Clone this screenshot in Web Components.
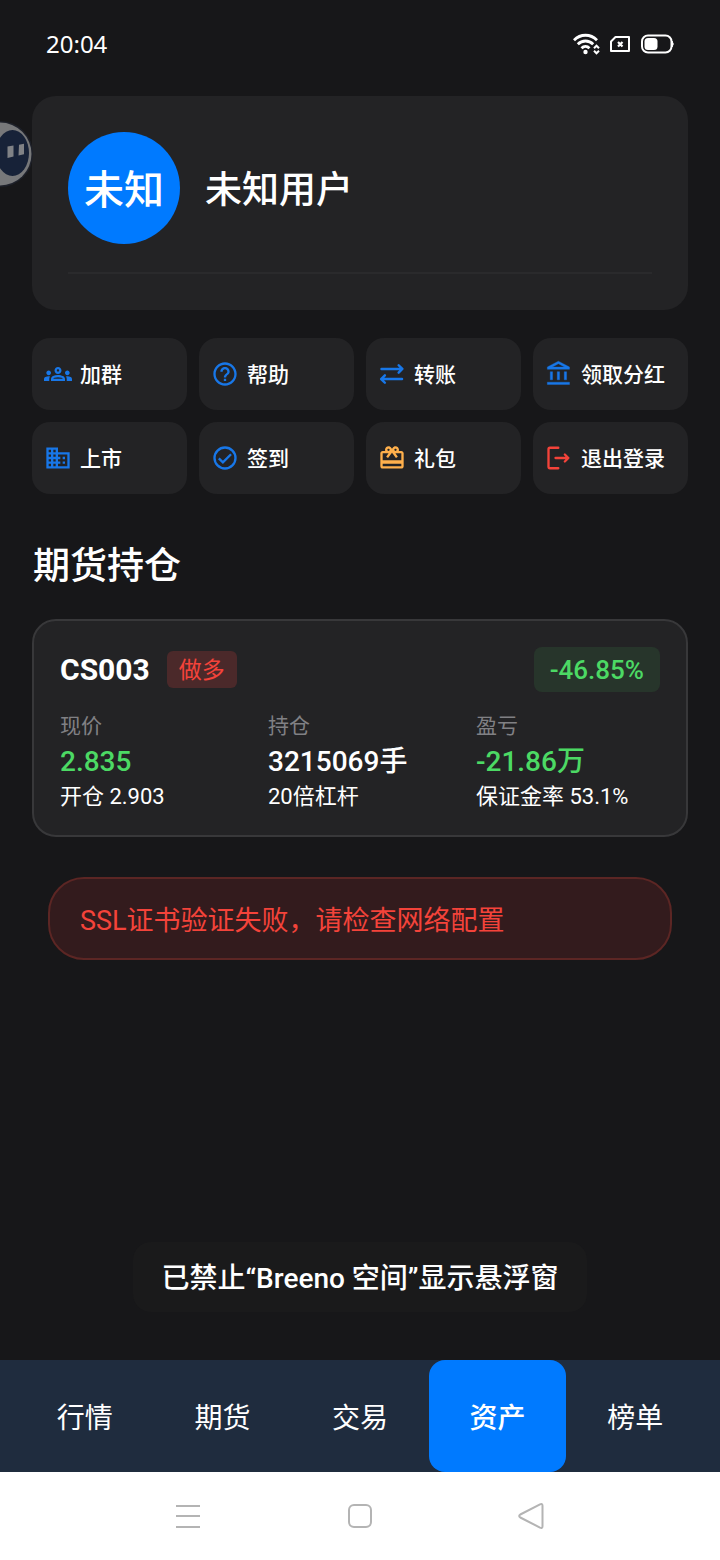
<!DOCTYPE html>
<html lang="zh-CN">
<head>
<meta charset="utf-8">
<meta name="viewport" content="width=device-width, initial-scale=1">
<title>资产</title>
<style>
    :root {
        --bg: #171719;
        --surface: #232325;
        --line: #38383a;
        --blue: #007aff;
        --icon-blue: #1877e8;
        --green: #4cd964;
        --red: #f4433a;
        --gold: #ffb04c;
        --muted: #808084;
    }

    body {
        margin: 0;
        min-height: 100vh;
        display: flex;
        flex-direction: column;
        background: var(--bg);
        color: #fff;
        font-family: Roboto, "Noto Sans CJK SC", sans-serif;
        font-size: 21px;
        line-height: 24px;
    }

    main {
        flex: 1;
        padding: 8px 32px 32px;
    }

    h1 {
        margin: 46px 0 26px;
        padding-left: 1px;
        font-size: 37px;
        line-height: 53px;
        font-weight: 500;
    }
</style>
</head>
<body>
    <status-bar>20:04</status-bar>

    <main>
        <profile-card avatar="未知">未知用户</profile-card>

        <action-grid>
            <action-tile icon="groups">加群</action-tile>
            <action-tile icon="help">帮助</action-tile>
            <action-tile icon="transfer">转账</action-tile>
            <action-tile icon="bank">领取分红</action-tile>
            <action-tile icon="building">上市</action-tile>
            <action-tile icon="check">签到</action-tile>
            <action-tile icon="gift" style="--tint: var(--gold)">礼包</action-tile>
            <action-tile icon="logout" style="--tint: var(--red)">退出登录</action-tile>
        </action-grid>

        <h1>期货持仓</h1>

        <position-card code="CS003" side="做多" change="-46.85%">
            <stat-cell label="现价" value="2.835" note="开仓 2.903" style="--value: var(--green)"></stat-cell>
            <stat-cell label="持仓" value="3215069手" note="20倍杠杆"></stat-cell>
            <stat-cell label="盈亏" value="-21.86万" note="保证金率 53.1%" style="--value: var(--green)"></stat-cell>
        </position-card>

        <error-banner>SSL证书验证失败，请检查网络配置</error-banner>
    </main>

    <tab-bar>
        <tab-item>行情</tab-item>
        <tab-item>期货</tab-item>
        <tab-item>交易</tab-item>
        <tab-item active>资产</tab-item>
        <tab-item>榜单</tab-item>
    </tab-bar>
    <system-nav></system-nav>

    <toast-message>已禁止“Breeno 空间”显示悬浮窗</toast-message>
    <assist-bubble></assist-bubble>

<script>
// 24x24 icons for the action tiles
const ICONS = {
    groups: '<path d="M4 13c1.1 0 2-.9 2-2s-.9-2-2-2-2 .9-2 2 .9 2 2 2zm1.13 1.1c-.37-.06-.74-.1-1.13-.1-.99 0-1.93.21-2.78.58C.48 14.9 0 15.62 0 16.43V18h4.5v-1.61c0-.83.23-1.61.63-2.29zM20 13c1.1 0 2-.9 2-2s-.9-2-2-2-2 .9-2 2 .9 2 2 2zm4 3.43c0-.81-.48-1.53-1.22-1.85-.85-.37-1.79-.58-2.78-.58-.39 0-.76.04-1.13.1.4.68.63 1.46.63 2.29V18H24v-1.57zm-7.76-2.78c-1.17-.52-2.61-.9-4.24-.9s-3.07.39-4.24.9C6.68 14.13 6 15.21 6 16.39V18h12v-1.61c0-1.18-.68-2.26-1.76-2.74zM8.07 16c.09-.23.13-.39.91-.69.97-.38 1.99-.56 3.02-.56s2.05.18 3.02.56c.77.3.81.46.91.69H8.07zM12 8c.55 0 1 .45 1 1s-.45 1-1 1-1-.45-1-1 .45-1 1-1m0-2c-1.66 0-3 1.34-3 3s1.34 3 3 3 3-1.34 3-3-1.34-3-3-3z"/>',
    help: '<path d="M11 18h2v-2h-2v2zm1-16C6.48 2 2 6.48 2 12s4.48 10 10 10 10-4.48 10-10S17.52 2 12 2zm0 18c-4.41 0-8-3.59-8-8s3.59-8 8-8 8 3.59 8 8-3.59 8-8 8zm0-14c-2.21 0-4 1.79-4 4h2c0-1.1.9-2 2-2s2 .9 2 2c0 2-3 1.75-3 5h2c0-2.25 3-2.5 3-5 0-2.21-1.79-4-4-4z"/>',
    transfer: '<path d="M3 7.7h17.8M17.7 4.5l3.2 3.2-3.2 3.2M20.6 16.300H2.800M5.900 13.100l-3.200 3.200 3.200 3.200" fill="none" stroke="currentColor" stroke-width="2.1" stroke-linecap="round" stroke-linejoin="round"/>',
    bank: '<path d="M6.5 10h-2v7h2v-7zm6 0h-2v7h2v-7zm8.5 9H2v2h19v-2zm-2.5-9h-2v7h2v-7zm-7-6.74L16.71 6H6.29l5.21-2.74m0-2.26L2 6v2h19V6l-9.5-5z" stroke="currentColor" stroke-width=".3"/>',
    building: '<path d="M12 7V3H2v18h20V7H12zM6 19H4v-2h2v2zm0-4H4v-2h2v2zm0-4H4V9h2v2zm0-4H4V5h2v2zm4 12H8v-2h2v2zm0-4H8v-2h2v2zm0-4H8V9h2v2zm0-4H8V5h2v2zm10 12h-8v-2h2v-2h-2v-2h2v-2h-2V9h8v10zm-2-8h-2v2h2v-2zm0 4h-2v2h2v-2z"/>',
    check: '<g fill="none" stroke="currentColor" stroke-width="2"><circle cx="12" cy="12" r="9"/><path d="M6.7 12.3l3.5 3.5 7-7"/></g>',
    gift: '<path d="M20 6h-2.18c.11-.31.18-.65.18-1 0-1.66-1.34-3-3-3-1.05 0-1.96.54-2.5 1.35l-.5.67-.5-.68C10.96 2.54 10.05 2 9 2 7.34 2 6 3.34 6 5c0 .35.07.69.18 1H4c-1.11 0-1.99.89-1.99 2L2 19c0 1.11.89 2 2 2h16c1.11 0 2-.89 2-2V8c0-1.11-.89-2-2-2zm-5-2c.55 0 1 .45 1 1s-.45 1-1 1-1-.45-1-1 .45-1 1-1zM9 4c.55 0 1 .45 1 1s-.45 1-1 1-1-.45-1-1 .45-1 1-1zm11 15H4v-2h16v2zm0-5H4V8h5.08L7 10.83 8.62 12 11 8.76l1-1.36 1 1.36L15.38 12 17 10.83 14.92 8H20v6z"/>',
    logout: '<path d="M11.4 3.2H4.2a1.2 1.2 0 0 0-1.2 1.2v15.2a1.2 1.2 0 0 0 1.2 1.2h7.2M9 12h11M17 9l3 3-3 3" fill="none" stroke="currentColor" stroke-width="2" stroke-linecap="round" stroke-linejoin="round"/>'
};

// Shared base: opens the shadow root and renders once connected
class BaseElement extends HTMLElement {
    constructor() {
        super();
        this.attachShadow({ mode: 'open' });
    }

    connectedCallback() {
        this.shadowRoot.innerHTML = this.template();
    }
}

class StatusBar extends BaseElement {
    template() {
        return `
            <style>
                :host {
                    display: flex;
                    justify-content: space-between;
                    align-items: center;
                    height: 88px;
                    padding: 0 45px 0 46px;
                    font: 24px/28px "Noto Sans", sans-serif;
                }
                .icons { display: flex; align-items: center; gap: 10px; }
                svg { display: block; }
            </style>
            <slot></slot>
            <div class="icons">
                <svg width="27" height="22" viewBox="0 0 27 22" fill="none" stroke="#fff" stroke-width="2.8">
                    <path d="M1 7.2C7.5.6 17.5.6 24 7.2M4.8 11.3c4.4-4.4 11-4.4 15.4 0M8.5 15.2c2.3-2.3 5.7-2.3 8 0"/>
                    <circle cx="12.5" cy="19" r="2.2" fill="#fff" stroke="none"/>
                    <path d="M21 15.2l2.500-2.500 2.500 2.500M21 17.800l2.500 2.500 2.500-2.500" stroke-width="2"/>
                </svg>
                <svg width="20" height="18" viewBox="0 0 20 18" fill="none" stroke="#fff" stroke-width="2">
                    <path d="M5.5 2H19v14H1V6.5z" stroke-linejoin="round"/>
                    <path d="M8 7l4.5 4.5M12.5 7L8 11.5" stroke-width="2.2"/>
                </svg>
                <svg width="35" height="20" viewBox="0 0 35 20">
                    <rect x="2" y="1.5" width="29.5" height="17" rx="6" fill="none" stroke="#fff" stroke-width="2"/>
                    <rect x="4.500" y="4" width="13" height="12" rx="3.500" fill="#fff"/>
                    <path d="M32 7q2.500 3 0 6z" fill="#fff" stroke="#fff"/>
                </svg>
            </div>
        `;
    }
}

class ProfileCard extends BaseElement {
    template() {
        return `
            <style>
                :host {
                    display: block;
                    padding: 36px;
                    border-radius: 24px;
                    background: var(--surface);
                }
                .user {
                    display: flex;
                    align-items: center;
                    gap: 25px;
                    padding-bottom: 28px;
                    border-bottom: 2px solid #2a2a2c;
                    font-size: 37px;
                    line-height: 44px;
                    font-weight: 500;
                }
                .avatar, .name {
                    box-sizing: border-box;
                    padding-top: 6px;
                }
                .avatar {
                    display: grid;
                    place-items: center;
                    width: 112px;
                    height: 112px;
                    border-radius: 50%;
                    background: var(--blue);
                    font-size: 40px;
                }
            </style>
            <div class="user">
                <div class="avatar">${this.getAttribute('avatar')}</div>
                <div class="name"><slot></slot></div>
            </div>
        `;
    }
}

class ActionGrid extends BaseElement {
    template() {
        return `
            <style>
                :host {
                    display: grid;
                    grid-template-columns: repeat(4, 1fr);
                    gap: 12px;
                    margin-top: 28px;
                }
            </style>
            <slot></slot>
        `;
    }
}

class ActionTile extends BaseElement {
    template() {
        return `
            <style>
                :host { display: block; }
                button {
                    display: flex;
                    align-items: center;
                    gap: 8px;
                    width: 100%;
                    height: 72px;
                    padding: 0 12px;
                    border: 0;
                    border-radius: 18px;
                    background: var(--surface);
                    color: inherit;
                    font: inherit;
                    font-weight: 500;
                    white-space: nowrap;
                }
                span { padding-top: 2px; }
                svg {
                    flex: none;
                    color: var(--tint, var(--icon-blue));
                    fill: currentColor;
                }
            </style>
            <button type="button">
                <svg width="28" height="28" viewBox="0 0 24 24">${ICONS[this.getAttribute('icon')]}</svg>
                <span><slot></slot></span>
            </button>
        `;
    }
}

class PositionCard extends BaseElement {
    template() {
        return `
            <style>
                :host {
                    display: block;
                    padding: 26px;
                    border: 2px solid var(--line);
                    border-radius: 24px;
                    background: var(--surface);
                }
                header {
                    display: flex;
                    align-items: center;
                    gap: 17px;
                    margin-bottom: 22px;
                }
                .code {
                    font-size: 30px;
                    line-height: 36px;
                    font-weight: 700;
                }
                .side {
                    padding: 5px 12px 3px;
                    border-radius: 6px;
                    background: #4b292a;
                    color: var(--red);
                    font-size: 23px;
                    line-height: 29px;
                }
                .change {
                    margin-left: auto;
                    padding: 9px 16px 7px;
                    border-radius: 8px;
                    background: #27352b;
                    color: var(--green);
                    font-size: 26px;
                    line-height: 29px;
                    font-weight: 500;
                }
                .stats {
                    display: grid;
                    grid-template-columns: repeat(3, 1fr);
                    gap: 24px;
                }
            </style>
            <header>
                <span class="code">${this.getAttribute('code')}</span>
                <span class="side">${this.getAttribute('side')}</span>
                <span class="change">${this.getAttribute('change')}</span>
            </header>
            <div class="stats"><slot></slot></div>
        `;
    }
}

class StatCell extends BaseElement {
    template() {
        return `
            <style>
                :host {
                    display: flex;
                    flex-direction: column;
                    gap: 5px;
                    white-space: nowrap;
                }
                .label { color: var(--muted); }
                .value {
                    color: var(--value, #fff);
                    font-size: 28px;
                    line-height: 37px;
                    font-weight: 500;
                }
                .note { font-size: 22px; }
            </style>
            <span class="label">${this.getAttribute('label')}</span>
            <span class="value">${this.getAttribute('value')}</span>
            <span class="note">${this.getAttribute('note')}</span>
        `;
    }
}

class ErrorBanner extends BaseElement {
    template() {
        return `
            <style>
                :host {
                    display: block;
                    margin: 40px 16px 0;
                    padding: 23px 30px 17px;
                    border: 2px solid #5c2624;
                    border-radius: 36px;
                    background: #331b1d;
                    color: var(--red);
                    font-size: 27px;
                    line-height: 39px;
                }
            </style>
            <slot></slot>
        `;
    }
}

class TabBar extends BaseElement {
    template() {
        return `
            <style>
                :host { display: block; background: #1f2c3e; }
                nav { display: flex; padding: 0 16px; }
            </style>
            <nav><slot></slot></nav>
        `;
    }
}

class TabItem extends BaseElement {
    template() {
        return `
            <style>
                :host { flex: 1; }
                button {
                    display: block;
                    width: 100%;
                    height: 112px;
                    padding: 6px 0 0;
                    border: 0;
                    border-radius: 16px;
                    background: transparent;
                    color: inherit;
                    font: inherit;
                    font-size: 28px;
                }
                :host([active]) button {
                    background: var(--blue);
                    font-weight: 500;
                }
            </style>
            <button type="button"><slot></slot></button>
        `;
    }
}

class SystemNav extends BaseElement {
    template() {
        return `
            <style>
                :host {
                    display: flex;
                    justify-content: center;
                    gap: 116px;
                    height: 88px;
                    background: #fff;
                }
                button {
                    width: 56px;
                    padding: 0;
                    border: 0;
                    background: none;
                }
                svg {
                    display: block;
                    margin: auto;
                    fill: none;
                    stroke: #b4b4b4;
                    stroke-width: 2;
                    stroke-linejoin: round;
                }
            </style>
            <button type="button" aria-label="最近任务">
                <svg width="28" height="28" viewBox="0 0 28 28"><path d="M2 4h24M2 14h24M2 25h24"/></svg>
            </button>
            <button type="button" aria-label="主屏幕">
                <svg width="28" height="28" viewBox="0 0 28 28"><rect x="3" y="3" width="22" height="22" rx="5"/></svg>
            </button>
            <button type="button" aria-label="返回">
                <svg width="28" height="28" viewBox="0 0 28 28"><path d="M22 2.400q2.500-1.200 2.500 1.300v20.600q0 2.500-2.500 1.300L2.300 15.500q-2.200-1.500 0-3z"/></svg>
            </button>
        `;
    }
}

class ToastMessage extends BaseElement {
    template() {
        return `
            <style>
                :host {
                    position: fixed;
                    bottom: 248px;
                    left: 0;
                    right: 0;
                    width: max-content;
                    margin: 0 auto;
                    padding: 18px 28px 14px;
                    border-radius: 18px;
                    background: #1a1a1b;
                    font-size: 28px;
                    line-height: 38px;
                    font-weight: 500;
                }
            </style>
            <slot></slot>
        `;
    }
}

// Half-hidden floating bubble on the left screen edge
class AssistBubble extends BaseElement {
    template() {
        return `
            <style>
                :host { position: fixed; top: 120px; left: 0; }
                svg { display: block; }
            </style>
            <svg width="34" height="68" viewBox="0 0 34 68">
                <circle cx="0" cy="34" r="33" fill="#1e212a"/>
                <circle cx="0" cy="34" r="31.5" fill="#77787a"/>
                <ellipse cx="12.500" cy="33" rx="16.500" ry="23" fill="#172238"/>
                <path d="M7.500 26.500l6-1v11l-6 1.500zM19 24.800l5-1v10.500l-5.500 1.200z" fill="#808286"/>
            </svg>
        `;
    }
}

customElements.define('status-bar', StatusBar);
customElements.define('profile-card', ProfileCard);
customElements.define('action-grid', ActionGrid);
customElements.define('action-tile', ActionTile);
customElements.define('position-card', PositionCard);
customElements.define('stat-cell', StatCell);
customElements.define('error-banner', ErrorBanner);
customElements.define('tab-bar', TabBar);
customElements.define('tab-item', TabItem);
customElements.define('system-nav', SystemNav);
customElements.define('toast-message', ToastMessage);
customElements.define('assist-bubble', AssistBubble);
</script>
</body>
</html>
